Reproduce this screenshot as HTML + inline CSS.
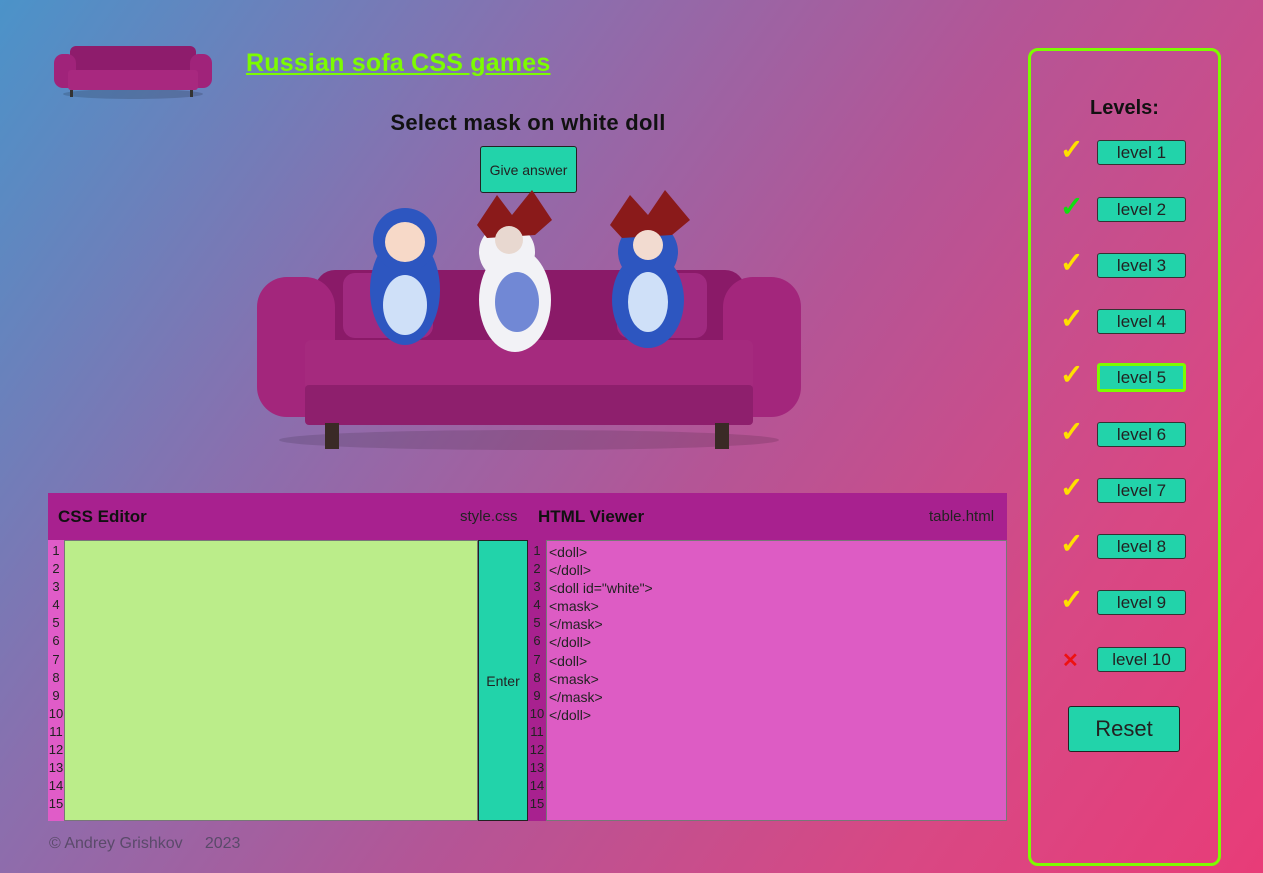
<!DOCTYPE html>
<html><head><meta charset="utf-8"><style>
*{box-sizing:border-box;margin:0;padding:0}
body{width:1263px;height:873px;overflow:hidden;position:relative;font-family:"Liberation Sans",sans-serif;background:linear-gradient(125deg,#4b93c9 0%,#8a6fae 30%,#b45596 55%,#d84884 80%,#e83c78 100%)}
.abs{position:absolute}
.title{left:246px;top:49px;font-size:25px;font-weight:bold;color:#7cfc00;text-decoration:underline;letter-spacing:.2px}
.sel{left:330px;width:396px;text-align:center;top:110px;font-size:22px;font-weight:bold;color:#111;letter-spacing:.3px}
.give{left:480px;top:146px;width:97px;height:47px;background:#22d3aa;border:1px solid #222;border-radius:3px;font-size:14px;color:#222;display:flex;align-items:center;justify-content:center}
.hdr{left:48px;top:493px;width:959px;height:47px;background:#a8218f}
.hdr b{position:absolute;top:14px;font-size:17px;color:#111}
.hdr span{position:absolute;top:15px;font-size:15px;color:#222}
.nums{font-size:13px;line-height:18.1px;color:#222;text-align:center;padding-top:2px}
.lv{left:1097px;width:89px;height:25px;background:#22d3aa;border:1px solid #333;border-radius:3px;font-size:17px;color:#222;text-align:center;line-height:23px}
.ck{left:1060px;font-size:28px;color:#ffe000;font-weight:bold}
</style></head><body>
<svg class="abs" style="left:50px;top:36px" width="166" height="64" viewBox="0 0 166 64">
<ellipse cx="83" cy="58" rx="70" ry="5" fill="#000" opacity=".15"/>
<rect x="20" y="10" width="126" height="26" rx="6" fill="#8e1c6c"/>
<rect x="4" y="18" width="22" height="34" rx="9" fill="#a0237a"/>
<rect x="140" y="18" width="22" height="34" rx="9" fill="#a0237a"/>
<rect x="18" y="34" width="130" height="20" rx="3" fill="#a8287f"/>
<rect x="20" y="54" width="3" height="7" fill="#333"/><rect x="140" y="54" width="3" height="7" fill="#333"/>
</svg>
<div class="abs title">Russian sofa CSS games</div>
<div class="abs sel">Select mask on white doll</div>
<div class="abs give">Give answer</div>
<svg class="abs" style="left:255px;top:185px" width="548" height="270" viewBox="0 0 548 270">
<ellipse cx="274" cy="255" rx="250" ry="10" fill="#000" opacity=".12"/>
<rect x="60" y="85" width="430" height="80" rx="20" fill="#8a1a68"/>
<rect x="88" y="88" width="90" height="65" rx="12" fill="#a02a80"/>
<rect x="362" y="88" width="90" height="65" rx="12" fill="#a02a80"/>
<rect x="2" y="92" width="78" height="140" rx="30" fill="#a3267c"/>
<rect x="468" y="92" width="78" height="140" rx="30" fill="#a3267c"/>
<rect x="50" y="155" width="448" height="50" rx="6" fill="#a52a7e"/>
<rect x="50" y="200" width="448" height="40" rx="4" fill="#8e1f6d"/>
<rect x="70" y="238" width="14" height="26" fill="#3a2a26"/><rect x="460" y="238" width="14" height="26" fill="#3a2a26"/>
<g transform="translate(115,25)"><ellipse cx="35" cy="80" rx="35" ry="55" fill="#2d56c0"/><circle cx="35" cy="30" r="32" fill="#2d56c0"/><circle cx="35" cy="32" r="20" fill="#f7d9c8"/><ellipse cx="35" cy="95" rx="22" ry="30" fill="#cfe0f8"/></g>
<g transform="translate(222,5)"><ellipse cx="38" cy="110" rx="36" ry="52" fill="#f2f2f6"/><circle cx="30" cy="62" r="28" fill="#f2f2f6"/><ellipse cx="40" cy="112" rx="22" ry="30" fill="#3b5bc8" opacity=".7"/><path d="M0 35 L20 5 L35 25 L55 0 L75 30 L58 45 L10 48Z" fill="#8a1a1a"/><circle cx="32" cy="50" r="14" fill="#e8d8d0"/></g>
<g transform="translate(355,5)"><ellipse cx="38" cy="110" rx="36" ry="48" fill="#2d56c0"/><circle cx="38" cy="62" r="30" fill="#2d56c0"/><ellipse cx="38" cy="112" rx="20" ry="30" fill="#cfe0f8"/><path d="M0 35 L20 5 L38 25 L55 0 L80 30 L62 45 L12 48Z" fill="#8a1a1a"/><circle cx="38" cy="55" r="15" fill="#f2dbd0"/></g>
</svg>
<div class="abs hdr"><b style="left:10px">CSS Editor</b><span style="left:412px">style.css</span><b style="left:490px">HTML Viewer</b><span style="left:881px">table.html</span></div>
<div class="abs nums" style="left:48px;top:540px;width:16px;height:281px;background:#e05cc8">1<br>2<br>3<br>4<br>5<br>6<br>7<br>8<br>9<br>10<br>11<br>12<br>13<br>14<br>15</div>
<div class="abs" style="left:64px;top:540px;width:414px;height:281px;background:#bbed8a;border:1px solid #777"></div>
<div class="abs" style="left:478px;top:540px;width:50px;height:281px;background:#22d3aa;border:1px solid #222;font-size:14px;color:#222;display:flex;align-items:center;justify-content:center">Enter</div>
<div class="abs nums" style="left:528px;top:540px;width:18px;height:281px;background:#a8218f">1<br>2<br>3<br>4<br>5<br>6<br>7<br>8<br>9<br>10<br>11<br>12<br>13<br>14<br>15</div>
<div class="abs nums" style="left:546px;top:540px;width:461px;height:281px;background:#dd5cc4;border:1px solid #777;text-align:left;padding-left:2px;font-size:14px">&lt;doll&gt;<br>&lt;/doll&gt;<br>&lt;doll id="white"&gt;<br>&lt;mask&gt;<br>&lt;/mask&gt;<br>&lt;/doll&gt;<br>&lt;doll&gt;<br>&lt;mask&gt;<br>&lt;/mask&gt;<br>&lt;/doll&gt;</div>
<div class="abs" style="left:49px;top:835px;font-size:16px;color:#5a4a6a">© Andrey Grishkov &nbsp;&nbsp;&nbsp; 2023</div>
<div class="abs" style="left:1028px;top:48px;width:193px;height:818px;border:3px solid #7cfc00;border-radius:10px"></div>
<div class="abs" style="left:1028px;width:193px;text-align:center;top:97px;font-size:20px;font-weight:bold;color:#111">Levels:</div>
<div class="abs ck" style="top:133px">✓</div><div class="abs lv" style="top:140px">level 1</div>
<div class="abs ck" style="top:190px;color:#11dd11">✓</div><div class="abs lv" style="top:197px">level 2</div>
<div class="abs ck" style="top:246px">✓</div><div class="abs lv" style="top:253px">level 3</div>
<div class="abs ck" style="top:302px">✓</div><div class="abs lv" style="top:309px">level 4</div>
<div class="abs ck" style="top:358px">✓</div><div class="abs lv" style="top:363px;height:29px;border:3px solid #7cfc00;line-height:23px">level 5</div>
<div class="abs ck" style="top:415px">✓</div><div class="abs lv" style="top:422px">level 6</div>
<div class="abs ck" style="top:471px">✓</div><div class="abs lv" style="top:478px">level 7</div>
<div class="abs ck" style="top:527px">✓</div><div class="abs lv" style="top:534px">level 8</div>
<div class="abs ck" style="top:583px">✓</div><div class="abs lv" style="top:590px">level 9</div>
<div class="abs" style="left:1062px;top:648px;font-size:20px;color:#ee1111;font-weight:bold">✕</div><div class="abs lv" style="top:647px">level 10</div>
<div class="abs" style="left:1068px;top:706px;width:112px;height:46px;background:#22d3aa;border:1px solid #222;border-radius:3px;font-size:22px;color:#222;text-align:center;line-height:44px">Reset</div>
</body></html>
